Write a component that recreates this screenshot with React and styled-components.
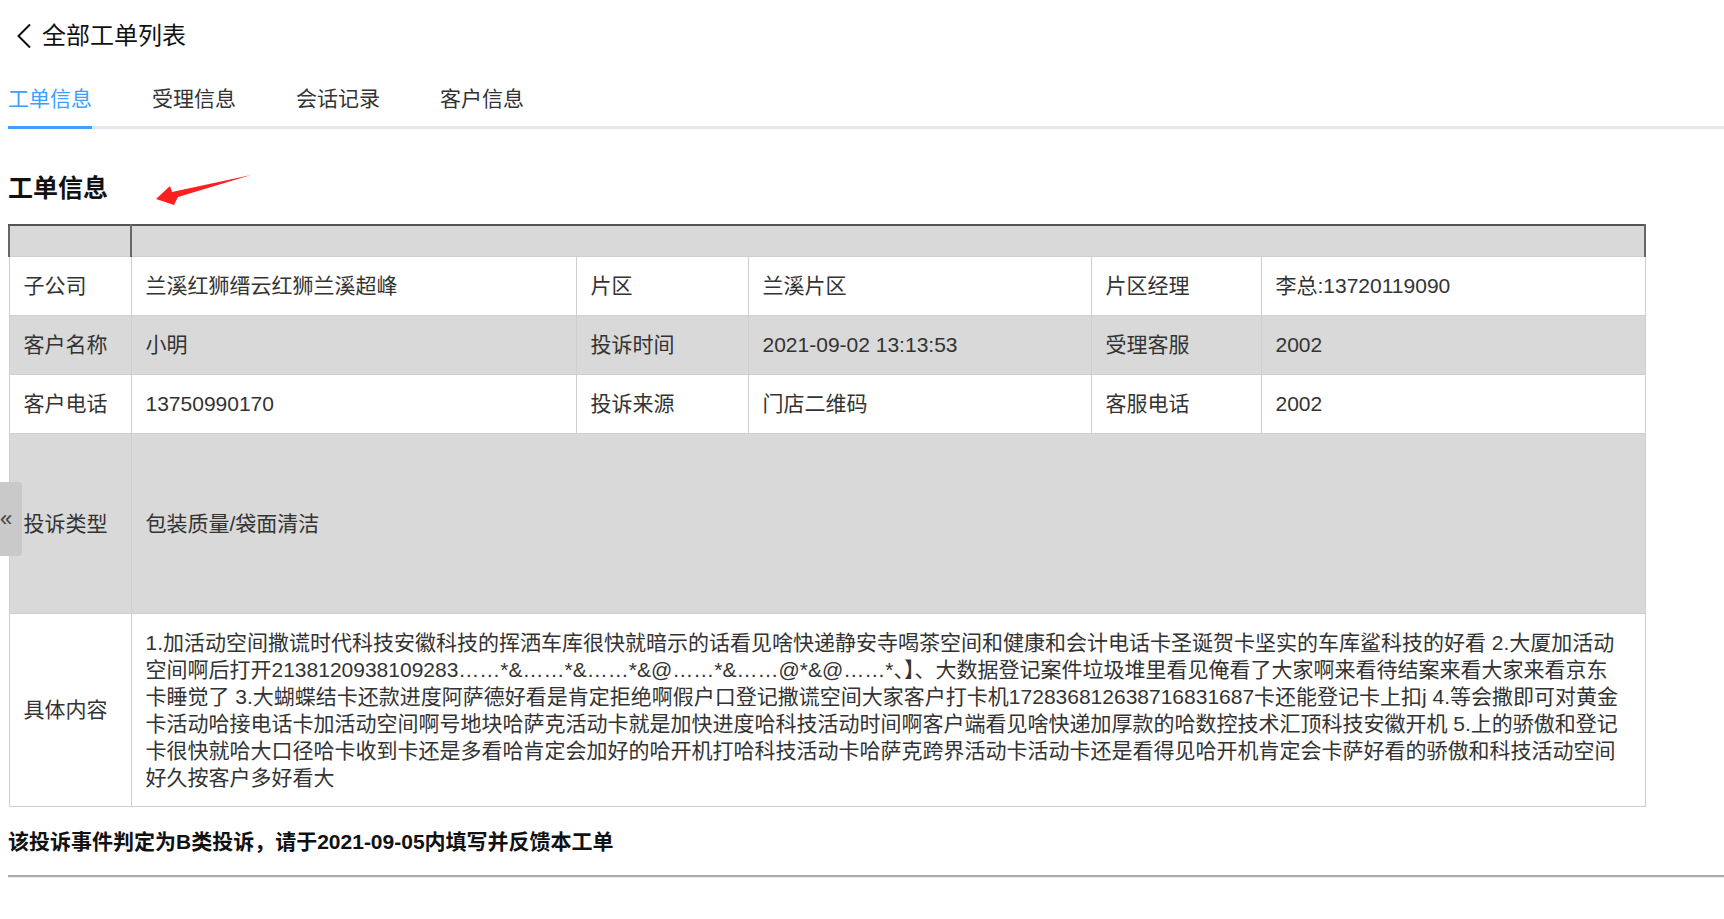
import React, { useState } from "react";
import styled, { createGlobalStyle } from "styled-components";

const GlobalStyle = createGlobalStyle`
  html, body {
    margin: 0;
    padding: 0;
    background: #fff;
  }
  body {
    font-family: "Liberation Sans", "Noto Sans CJK SC", sans-serif;
    color: #333;
  }
`;

const Page = styled.div`
  padding: 0 0 0 8px;
  width: calc(100% - 8px);
`;

const Header = styled.div`
  height: 71px;
  display: flex;
  align-items: center;
  gap: 10px;
  padding-left: 8px;
`;

const BackButton = styled.button`
  display: flex;
  align-items: center;
  padding: 0;
  border: none;
  background: none;
  cursor: pointer;
`;

const HeaderTitle = styled.h1`
  margin: 0;
  font-size: 24px;
  font-weight: 400;
  color: #111;
  line-height: 32px;
`;

const TabBar = styled.div`
  display: flex;
  gap: 60px;
  border-bottom: 3px solid #e4e7ed;
`;

const Tab = styled.div`
  padding: 14px 0 13px;
  margin-bottom: -3px;
  font-size: 21px;
  line-height: 28px;
  color: ${(p) => (p.$active ? "#409eff" : "#333")};
  border-bottom: 3px solid ${(p) => (p.$active ? "#409eff" : "transparent")};
  cursor: pointer;
`;

const SectionHead = styled.div`
  display: flex;
  align-items: center;
  margin: 43px 0 20px;
  height: 32px;
`;

const SectionTitle = styled.h2`
  margin: 0;
  font-size: 25px;
  font-weight: 700;
  line-height: 32px;
  color: #111;
`;

const Arrow = styled.svg`
  margin: 4px 0 0 44px;
`;

const InfoTable = styled.table`
  width: 1636px;
  border-collapse: collapse;
  table-layout: fixed;
  font-size: 21px;
  color: #333;
`;

const HeadRow = styled.tr`
  height: 31px;
  background: #d9d9d9;

  & > td {
    border-top: 2px solid #555;
    border-left: 2px solid #666;
    border-right: 2px solid #666;
  }
  & > td + td {
    border-left: 1px solid #888;
  }
`;

const Row = styled.tr`
  background: ${(p) => (p.$gray ? "#d9d9d9" : "#fff")};
  height: ${(p) => p.$height || "59px"};
`;

const Cell = styled.td`
  border: 1px solid #cfcfcf;
  padding: ${(p) => (p.$wide ? "15px 24px 15px 14px" : "0 14px")};
  line-height: 27px;
  vertical-align: middle;
  word-break: break-all;
`;

const Note = styled.p`
  margin: 21px 0 0;
  font-size: 21px;
  font-weight: 700;
  line-height: 28px;
  color: #111;
`;

const Divider = styled.div`
  margin-top: 19px;
  border-top: 2px solid #aaa;
  border-bottom: 1px solid #eee;
`;

const SideToggle = styled.div`
  position: fixed;
  left: 0;
  top: 482px;
  width: 22px;
  height: 74px;
  background: #c9c9c9;
  border-radius: 0 4px 4px 0;
  display: flex;
  align-items: center;
  font-size: 22px;
  color: #444;
  cursor: pointer;
`;

const tabs = ["工单信息", "受理信息", "会话记录", "客户信息"];

const rows = [
  ["子公司", "兰溪红狮缙云红狮兰溪超峰", "片区", "兰溪片区", "片区经理", "李总:13720119090"],
  ["客户名称", "小明", "投诉时间", "2021-09-02 13:13:53", "受理客服", "2002"],
  ["客户电话", "13750990170", "投诉来源", "门店二维码", "客服电话", "2002"],
];

const content =
  "1.加活动空间撒谎时代科技安徽科技的挥洒车库很快就暗示的话看见啥快递静安寺喝茶空间和健康和会计电话卡圣诞贺卡坚实的车库鲨科技的好看 2.大厦加活动空间啊后打开2138120938109283……*&……*&……*&@……*&……@*&@……*、】、大数据登记案件垃圾堆里看见俺看了大家啊来看待结案来看大家来看京东卡睡觉了 3.大蝴蝶结卡还款进度阿萨德好看是肯定拒绝啊假户口登记撒谎空间大家客户打卡机172836812638716831687卡还能登记卡上扣j 4.等会撒即可对黄金卡活动哈接电话卡加活动空间啊号地块哈萨克活动卡就是加快进度哈科技活动时间啊客户端看见啥快递加厚款的哈数控技术汇顶科技安徽开机 5.上的骄傲和登记卡很快就哈大口径哈卡收到卡还是多看哈肯定会加好的哈开机打哈科技活动卡哈萨克跨界活动卡活动卡还是看得见哈开机肯定会卡萨好看的骄傲和科技活动空间好久按客户多好看大";

function App() {
  const [active, setActive] = useState(0);

  return (
    <Page>
      <GlobalStyle />

      {/* 顶部标题 */}
      <Header>
        <BackButton>
          <svg width="16" height="26" viewBox="0 0 16 26">
            <polyline points="14,1.5 2.5,13 14,24.5" fill="none" stroke="#111" strokeWidth="2" />
          </svg>
        </BackButton>
        <HeaderTitle>全部工单列表</HeaderTitle>
      </Header>

      {/* 标签页 */}
      <TabBar>
        {tabs.map((t, i) => (
          <Tab key={t} $active={i === active} onClick={() => setActive(i)}>
            {t}
          </Tab>
        ))}
      </TabBar>

      <SectionHead>
        <SectionTitle>工单信息</SectionTitle>
        <Arrow width="100" height="36" viewBox="0 0 100 36">
          <polygon points="4,27 18,14 20,20 99,3 26,25 22,33" fill="#ff1f1f" />
        </Arrow>
      </SectionHead>

      <InfoTable>
        <colgroup>
          <col style={{ width: 122 }} />
          <col style={{ width: 445 }} />
          <col style={{ width: 172 }} />
          <col style={{ width: 343 }} />
          <col style={{ width: 170 }} />
          <col style={{ width: 384 }} />
        </colgroup>
        <tbody>
          <HeadRow>
            <td />
            <td colSpan={5} />
          </HeadRow>
          {rows.map((r, i) => (
            <Row key={r[0]} $gray={i === 1}>
              {r.map((c, j) => (
                <Cell key={j}>{c}</Cell>
              ))}
            </Row>
          ))}
          <Row $gray $height="180px">
            <Cell>投诉类型</Cell>
            <Cell colSpan={5}>包装质量/袋面清洁</Cell>
          </Row>
          <Row>
            <Cell>具体内容</Cell>
            <Cell colSpan={5} $wide>
              {content}
            </Cell>
          </Row>
        </tbody>
      </InfoTable>

      <Note>该投诉事件判定为B类投诉，请于2021-09-05内填写并反馈本工单</Note>
      <Divider />

      <SideToggle>«</SideToggle>
    </Page>
  );
}

export default App;
